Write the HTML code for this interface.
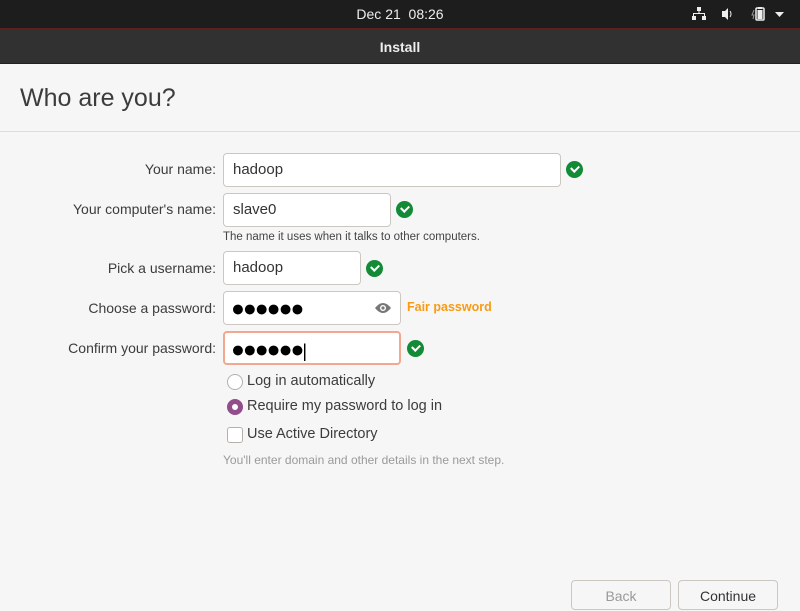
<!DOCTYPE html>
<html><head><style>
*{margin:0;padding:0;box-sizing:border-box}
body{width:800px;height:599px;overflow:hidden;background:#f6f6f6;font-family:"Liberation Sans","DejaVu Sans",sans-serif;position:relative;color:#3c3c3c}
.top{position:absolute;left:0;top:0;width:800px;height:28px;background:#1d1d1d;color:#eee;font-size:14px;text-align:center;line-height:28px}
.tb{position:absolute;left:0;top:28px;width:800px;height:36px;background:#323131;color:#eee;font-weight:bold;font-size:14px;text-align:center;line-height:36px;border-top:1px solid #5a1f1f;border-bottom:1px solid #222}
h1{position:absolute;left:20px;top:84px;font-weight:normal;font-size:25px;color:#3c3c3c}
.sep{position:absolute;left:0;top:131px;width:800px;height:1px;background:#dcdcdc}
.lbl{position:absolute;right:584px;font-size:14px;text-align:right;white-space:nowrap}
.in{position:absolute;left:223px;height:34px;background:#fff;border:1px solid #cdc7c2;border-radius:4px;font-size:15px;padding-left:9px;line-height:32px;color:#333}
.chk{position:absolute;width:17px;height:17px;border-radius:50%;background:#138a36}
.chk:after{content:"";position:absolute;left:5px;top:4px;width:6px;height:4px;border-left:2px solid #fff;border-bottom:2px solid #fff;transform:rotate(-45deg)}
.dots{font-size:23px;letter-spacing:-2px;color:#000;padding-left:7px}
.small{position:absolute;left:223px;font-size:11.5px;color:#444}
.opt{position:absolute;left:247px;font-size:14.5px}
.radio{position:absolute;left:227px;width:16px;height:16px;border-radius:50%;border:1px solid #b6b0aa;background:#fff}
.btn{position:absolute;top:580px;height:30px;border:1px solid #cdc7c2;border-radius:4px;background:#f6f6f6;font-size:14px;text-align:center;line-height:30px}
</style></head><body>
<div class="top">Dec 21&nbsp; 08:26
<svg style="position:absolute;left:692px;top:7px" width="100" height="14" viewBox="0 0 100 14">
<g fill="#eee"><rect x="5" y="0" width="4" height="4"/><rect x="6.5" y="4" width="1" height="3"/><rect x="1" y="6" width="12" height="1"/><rect x="1" y="6" width="1" height="4"/><rect x="12" y="6" width="1" height="4"/><rect x="0" y="9" width="4" height="4"/><rect x="10" y="9" width="4" height="4"/>
<path d="M30 4h3l3-3v12l-3-3h-3z"/><path d="M38 4q2 3 0 6" stroke="#eee" fill="none"/>
<path d="M62 3l-2 5h2l-1 4" stroke="#999" fill="none"/><rect x="64" y="1" width="8" height="12" rx="1" fill="none" stroke="#eee" stroke-width="1.5"/><rect x="66" y="0" width="4" height="2"/><rect x="65.5" y="3" width="5" height="9"/>
<path d="M83 5h9l-4.5 5z"/></g></svg></div>
<div class="tb">Install</div>
<h1>Who are you?</h1>
<div class="sep"></div>

<div class="lbl" style="top:161px">Your name:</div>
<div class="in" style="top:153px;width:338px">hadoop</div>
<div class="chk" style="left:566px;top:161px"></div>

<div class="lbl" style="top:201px">Your computer's name:</div>
<div class="in" style="top:193px;width:168px">slave0</div>
<div class="chk" style="left:396px;top:201px"></div>
<div class="small" style="top:231px">The name it uses when it talks to other computers.</div>

<div class="lbl" style="top:260px">Pick a username:</div>
<div class="in" style="top:251px;width:138px">hadoop</div>
<div class="chk" style="left:366px;top:260px"></div>

<div class="lbl" style="top:300px">Choose a password:</div>
<div class="in dots" style="top:291px;width:178px">●●●●●●
<svg style="position:absolute;right:8px;top:10px" width="18" height="12" viewBox="0 0 18 12"><path d="M1 6q8-10 16 0q-8 10-16 0z" fill="#777"/><circle cx="9" cy="6" r="3" fill="#fff"/><circle cx="9" cy="6" r="1.6" fill="#777"/></svg></div>
<div style="position:absolute;left:407px;top:300px;font-size:12.5px;font-weight:bold;color:#f99b11">Fair password</div>

<div class="lbl" style="top:340px">Confirm your password:</div>
<div class="in dots" style="top:331px;width:178px;border:2px solid #f1a88f;padding-left:6px">●●●●●●<span style="font-size:18px;color:#000">|</span></div>
<div class="chk" style="left:407px;top:340px"></div>

<div class="radio" style="top:374px"></div><div class="opt" style="top:373px">Log in automatically</div>
<div class="radio" style="top:399px;border:5px solid #924d8b"></div><div class="opt" style="top:398px">Require my password to log in</div>
<div class="radio" style="top:427px;border-radius:3px"></div><div class="opt" style="top:426px">Use Active Directory</div>
<div class="small" style="top:453px;color:#9a9a9a;font-size:12px">You'll enter domain and other details in the next step.</div>

<div class="btn" style="left:571px;width:100px;color:#999">Back</div>
<div class="btn" style="left:678px;width:100px;color:#333">Continue</div>
</body></html>
